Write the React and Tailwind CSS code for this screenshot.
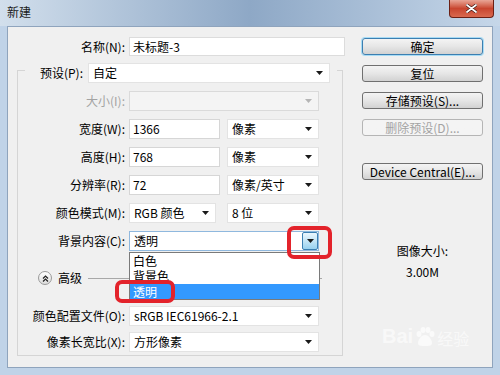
import React from 'react';
import clsx from 'clsx';

const Arrow = ({ disabled }) => (
  <svg width="7" height="4" viewBox="0 0 7 4" className="shrink-0">
    <path d="M0 0h7L3.5 4z" fill={disabled ? '#b5b5b5' : '#1a1a1a'} />
  </svg>
);

const Select = ({ w, children, disabled }) => (
  <div
    className={clsx(
      'h-[20px] flex items-center border pl-[4px] pr-[6px]',
      w,
      disabled ? 'bg-[#f4f4f4] border-[#dadada]' : 'bg-white border-[#e3e3e3]'
    )}
  >
    <span className="flex-1 truncate leading-[18px]">{children}</span>
    <Arrow disabled={disabled} />
  </div>
);

const Input = ({ w, children }) => (
  <div className={clsx('h-[20px] flex items-center bg-white border border-[#d6d6d6] pl-[3px]', w)}>
    <span className="leading-[18px]">{children}</span>
  </div>
);

const Row = ({ label, disabled, children }) => (
  <div className="h-[20px] flex items-center">
    <span className={clsx('w-[108px] text-right pr-[1px]', disabled && 'text-[#a3a3a3]')}>{label}</span>
    <div className="ml-[3px] flex items-center">{children}</div>
  </div>
);

const Button = ({ children, primary, disabled, className }) => (
  <div
    className={clsx(
      'h-[17px] w-[121px] rounded-[3px] border flex items-center justify-center leading-none',
      'bg-gradient-to-b from-[#f4f4f4] via-[#e6e6e6] to-[#d2d2d2]',
      primary ? 'border-[#3c7fb1] shadow-[0_0_0_1px_#a8dcf5]' : 'border-[#707070]',
      disabled && 'border-[#b5b5b5] text-[#a3a3a3] from-[#f4f4f4] to-[#f4f4f4] via-[#f4f4f4]',
      className
    )}
  >
    {children}
  </div>
);

export default function App() {
  return (
    <div className="relative w-[500px] h-[375px] overflow-hidden bg-[#c0d3e8] text-[12px] text-black font-['Noto_Sans_CJK_SC','Noto_Sans',sans-serif]">
      {/* title bar */}
      <div className="h-[26px] flex items-start bg-gradient-to-r from-[#d2dfec] via-[#8ea8c6] to-[#c6d7e9]">
        <span className="ml-[7px] mt-[5px] leading-[14px] text-[#1b1b1b]">新建</span>
        <div className="ml-auto mr-[6px] w-[45px] h-[18px] rounded-b-[4px] border border-t-0 border-[#6b2015] bg-gradient-to-b from-[#e8a596] via-[#c8452f] to-[#d9694f] flex items-center justify-center">
          <svg width="11" height="9" viewBox="0 0 11 9">
            <path d="M1 1l9 7M10 1L1 8" stroke="#3d1510" strokeWidth="3.2" strokeLinecap="round" />
            <path d="M1 1l9 7M10 1L1 8" stroke="#fff" strokeWidth="1.8" strokeLinecap="round" />
          </svg>
        </div>
      </div>

      {/* client area */}
      <div className="mx-[7px] h-[342px] bg-[#f0f0f0] border border-[#8fa4bd] flex">
        {/* left form */}
        <div className="w-[338px] flex flex-col">
          <div className="mt-[10px] h-[19px] flex items-center">
            <span className="w-[117px] text-right">名称(N):</span>
            <div className="ml-[4px] w-[216px] h-[19px] flex items-center bg-white border border-[#dcdcdc] pl-[3px]">未标题-3</div>
          </div>

          {/* preset group */}
          <div className="mt-[14px] ml-[9px] w-[326px] border border-[#d5d5d5] flex flex-col pb-[3px]">
            <div className="-mt-[8px] ml-[7px] w-[312px] h-[20px] bg-[#f0f0f0] flex items-center">
              <span className="w-[58px] text-right">预设(P):</span>
              <div className="ml-[5px]">
                <Select w="w-[242px]">自定</Select>
              </div>
            </div>

            <div className="mt-[8px] flex flex-col gap-[8px]">
              <Row label="大小(I):" disabled>
                <Select w="w-[190px]" disabled></Select>
              </Row>
              <Row label="宽度(W):">
                <Input w="w-[91px]">1366</Input>
                <div className="ml-[7px]"><Select w="w-[92px]">像素</Select></div>
              </Row>
              <Row label="高度(H):">
                <Input w="w-[91px]">768</Input>
                <div className="ml-[7px]"><Select w="w-[92px]">像素</Select></div>
              </Row>
              <Row label="分辨率(R):">
                <Input w="w-[91px]">72</Input>
                <div className="ml-[7px]"><Select w="w-[92px]">像素/英寸</Select></div>
              </Row>
              <Row label="颜色模式(M):">
                <Select w="w-[87px]">RGB 颜色</Select>
                <div className="ml-[11px]"><Select w="w-[92px]">8 位</Select></div>
              </Row>
              <Row label="背景内容(C):">
                <div className="w-[190px] h-[20px] flex items-center bg-white border border-[#8fb8de] pl-[4px]">
                  <span className="flex-1 leading-[18px]">透明</span>
                  <div className="w-[16px] h-[18px] border border-[#3c7fb1] rounded-[2px] bg-gradient-to-b from-[#eaf6fd] via-[#c4e5f6] to-[#98d1ef] flex items-center justify-center">
                    <Arrow />
                  </div>
                </div>
              </Row>
            </div>

            {/* advanced */}
            <div className="mt-[18px] h-[18px] flex items-center">
              <div className="ml-[20px] w-[14px] h-[14px] rounded-full border border-[#9a9a9a] bg-gradient-to-b from-white to-[#dcdcdc] flex items-center justify-center">
                <svg width="7" height="7" viewBox="0 0 7 7">
                  <path d="M1 3.5l2.5-2.5 2.5 2.5M1 6.5l2.5-2.5 2.5 2.5" stroke="#222" strokeWidth="1.2" fill="none" />
                </svg>
              </div>
              <span className="ml-[6px]">高级</span>
              <div className="ml-[6px] w-[234px] h-px bg-[#a8a8a8]" />
            </div>

            <div className="mt-[19px] flex flex-col gap-[6px]">
              <Row label="颜色配置文件(O):">
                <Select w="w-[190px]">sRGB IEC61966-2.1</Select>
              </Row>
              <Row label="像素长宽比(X):">
                <Select w="w-[190px]">方形像素</Select>
              </Row>
            </div>
          </div>
        </div>

        {/* right buttons */}
        <div className="ml-[16px] w-[121px] flex flex-col items-center pt-[11px]">
          <Button primary>确定</Button>
          <Button className="mt-[10px]">复位</Button>
          <Button className="mt-[10px]">存储预设(S)...</Button>
          <Button className="mt-[10px]" disabled>删除预设(D)...</Button>
          <Button className="mt-[27px]">Device Central(E)...</Button>
          <span className="mt-[64px] leading-[14px]">图像大小:</span>
          <span className="mt-[7px] leading-[14px]">3.00M</span>
        </div>
      </div>

      {/* open dropdown list */}
      <div className="absolute left-[129px] top-[252px] w-[191px] h-[48px] bg-white border border-[#7a7a7a] flex flex-col">
        <div className="h-[16px] pl-[3px] leading-[16px]">白色</div>
        <div className="h-[15px] pl-[3px] leading-[14px] overflow-hidden">背景色</div>
        <div className="h-[15px] pl-[3px] leading-[15px] bg-[#3399ff] text-white">透明</div>
      </div>

      {/* red annotation marks */}
      <div className="absolute left-[287px] top-[226px] w-[45px] h-[33px] border-[4px] border-[#e3232b] rounded-[7px]" />
      <div className="absolute left-[115px] top-[280px] w-[60px] h-[23px] border-[4px] border-[#e3232b] rounded-[7px]" />

      {/* watermark */}
      <div className="absolute left-[382px] top-[326px] flex items-end text-white/60 leading-none">
        <span className="text-[20px] font-bold font-['Liberation_Sans',sans-serif]">Bai</span>
        <svg width="22" height="20" viewBox="0 0 22 20" className="mx-[1px]">
          <g fill="rgba(255,255,255,0.65)">
            <ellipse cx="5" cy="8" rx="2.5" ry="3" />
            <ellipse cx="9" cy="4" rx="2.5" ry="3" />
            <ellipse cx="14" cy="4" rx="2.5" ry="3" />
            <ellipse cx="18" cy="8" rx="2.5" ry="3" />
            <path d="M11 9c-4 0-7 5-7 8s3 3 7 3 7 0 7-3-3-8-7-8z" />
          </g>
        </svg>
        <span className="text-[16px]">经验</span>
      </div>
    </div>
  );
}
